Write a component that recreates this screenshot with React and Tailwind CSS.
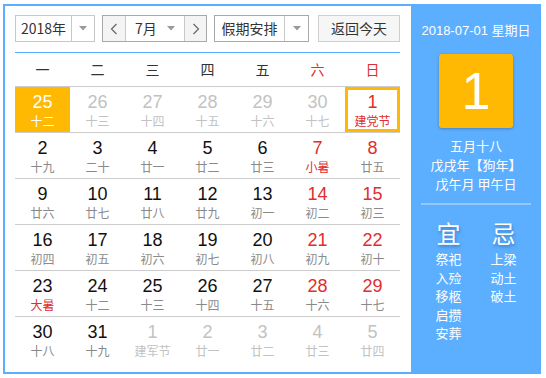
import React from "react";

const RED = "text-[#e12d2d]";

const rows = [
  [
    { d: "25", l: "十二", t: "hl" },
    { d: "26", l: "十三", t: "other" },
    { d: "27", l: "十四", t: "other" },
    { d: "28", l: "十五", t: "other" },
    { d: "29", l: "十六", t: "other" },
    { d: "30", l: "十七", t: "other" },
    { d: "1", l: "建党节", t: "sel" },
  ],
  [
    { d: "2", l: "十九" },
    { d: "3", l: "二十" },
    { d: "4", l: "廿一" },
    { d: "5", l: "廿二" },
    { d: "6", l: "廿三" },
    { d: "7", l: "小暑", red: true, redL: true },
    { d: "8", l: "廿五", red: true },
  ],
  [
    { d: "9", l: "廿六" },
    { d: "10", l: "廿七" },
    { d: "11", l: "廿八" },
    { d: "12", l: "廿九" },
    { d: "13", l: "初一" },
    { d: "14", l: "初二", red: true },
    { d: "15", l: "初三", red: true },
  ],
  [
    { d: "16", l: "初四" },
    { d: "17", l: "初五" },
    { d: "18", l: "初六" },
    { d: "19", l: "初七" },
    { d: "20", l: "初八" },
    { d: "21", l: "初九", red: true },
    { d: "22", l: "初十", red: true },
  ],
  [
    { d: "23", l: "大暑", redL: true },
    { d: "24", l: "十二" },
    { d: "25", l: "十三" },
    { d: "26", l: "十四" },
    { d: "27", l: "十五" },
    { d: "28", l: "十六", red: true },
    { d: "29", l: "十七", red: true },
  ],
  [
    { d: "30", l: "十八" },
    { d: "31", l: "十九" },
    { d: "1", l: "建军节", t: "other" },
    { d: "2", l: "廿一", t: "other" },
    { d: "3", l: "廿二", t: "other" },
    { d: "4", l: "廿三", t: "other" },
    { d: "5", l: "廿四", t: "other" },
  ],
];

const Tri = () => (
  <svg width="8" height="5" viewBox="0 0 8 5">
    <polygon points="0,0 8,0 4,4.5" fill="#9a9a9a" />
  </svg>
);

const Chev = ({ dir }) => (
  <svg width="8" height="12" viewBox="0 0 8 12">
    <polyline
      points={dir === "l" ? "6.5,1 1.5,6 6.5,11" : "1.5,1 6.5,6 1.5,11"}
      fill="none"
      stroke="#666"
      strokeWidth="1.2"
    />
  </svg>
);

function Cell({ c }) {
  const other = c.t === "other";
  const hl = c.t === "hl";
  const sel = c.t === "sel";
  let numCls = "text-[#111]";
  let lunCls = "text-[#8a8a8a]";
  if (c.red) numCls = RED;
  if (c.redL) lunCls = RED;
  if (other) {
    numCls = "text-[#c2c2c2]";
    lunCls = "text-[#c2c2c2]";
  }
  if (hl) {
    numCls = "text-white";
    lunCls = "text-white";
  }
  if (sel) {
    numCls = RED;
    lunCls = RED;
  }
  return (
    <div
      className={
        "flex flex-col items-center h-[45px] " +
        (hl ? "bg-[#ffb902] pt-[6px] " : "") +
        (sel ? "border-[3px] border-[#ffb902] pt-[3px] " : "pt-[6px] ")
      }
    >
      <div
        className={
          "text-[18px] leading-[18px] font-['Liberation_Sans',Arial,sans-serif] " +
          numCls
        }
      >
        {c.d}
      </div>
      <div
        className={
          "mt-[3px] text-[12px] leading-[14px] font-['Noto_Sans_CJK_SC',sans-serif] " +
          lunCls
        }
      >
        {c.l}
      </div>
    </div>
  );
}

export default function App() {
  const week = ["一", "二", "三", "四", "五", "六", "日"];
  return (
    <div className="w-[546px] h-[378px] bg-white pt-[4px] pl-[3px] font-['Noto_Sans_CJK_SC',sans-serif]">
      <div className="flex w-[538px] h-[370px] border-l-2 border-t-2 border-b-2 border-[#5caeff]">
        {/* left */}
        <div className="w-[406px] pl-[10px] pt-[9px]">
          <div className="flex h-[27px] text-[14px] text-[#333]">
            <div className="flex w-[80px] border border-[#c8c8c8]">
              <div className="w-[55px] flex items-center justify-center">2018年</div>
              <div className="flex-1 border-l border-[#c8c8c8] flex items-center justify-center">
                <Tri />
              </div>
            </div>
            <div className="flex w-[105px] ml-[7px] border border-[#a8a8a8]">
              <div className="w-[23px] bg-[#f4f4f4] flex items-center justify-center border-r border-[#c8c8c8]">
                <Chev dir="l" />
              </div>
              <div className="flex-1 flex items-center pl-[9px] pr-[9px] justify-between">
                <span>7月</span>
                <Tri />
              </div>
              <div className="w-[22px] bg-[#f4f4f4] flex items-center justify-center border-l border-[#c8c8c8]">
                <Chev dir="r" />
              </div>
            </div>
            <div className="flex w-[95px] ml-[7px] border border-[#a8a8a8]">
              <div className="w-[69px] flex items-center justify-center">假期安排</div>
              <div className="flex-1 border-l border-[#c8c8c8] flex items-center justify-center">
                <Tri />
              </div>
            </div>
            <div className="w-[82px] ml-[9px] border border-[#cfcfcf] bg-[#f6f6f6] flex items-center justify-center">
              返回今天
            </div>
          </div>
          <div className="w-[385px] mt-[10px] h-px bg-[#5caeff]" />
          <div className="w-[385px] grid grid-cols-7 h-[33px] items-center text-[14px]">
            {week.map((w, i) => (
              <div
                key={w}
                className={"text-center " + (i >= 5 ? RED : "text-[#333]")}
              >
                {w}
              </div>
            ))}
          </div>
          <div className="w-[385px]">
            {rows.map((r, ri) => (
              <div key={ri} className="grid grid-cols-7 border-t border-[#cccccc]">
                {r.map((c, ci) => (
                  <Cell key={ci} c={c} />
                ))}
              </div>
            ))}
          </div>
        </div>
        {/* right panel */}
        <div className="w-[130px] -mt-[2px] -mb-[2px] bg-[#5caeff] flex flex-col items-center text-white pt-[17px]">
          <div className="text-[13px] leading-[19px] font-['Liberation_Sans','Noto_Sans_CJK_SC',sans-serif]">
            2018-07-01 星期日
          </div>
          <div className="mt-[14px] w-[74px] h-[74px] rounded-[3px] bg-[#ffb902] shadow-[0_1px_3px_rgba(0,0,0,0.25)] flex items-center justify-center text-[52px] leading-none font-['Liberation_Sans',Arial,sans-serif]">
            1
          </div>
          <div className="mt-[8px] text-[13px] leading-[19px] text-center">
            <div>五月十八</div>
            <div>戊戌年【狗年】</div>
            <div>戊午月 甲午日</div>
          </div>
          <div className="mt-[10px] w-[110px] h-[2px] bg-[#94caff]" />
          <div className="flex w-[110px] mt-[14px]">
            <div className="w-[55px] flex flex-col items-center">
              <div className="text-[24px] leading-[28px] [text-shadow:1px_2px_3px_rgba(0,40,100,0.35)]">宜</div>
              <div className="mt-[3px] text-[13px] leading-[18.5px] text-center">
                <div>祭祀</div>
                <div>入殓</div>
                <div>移柩</div>
                <div>启攒</div>
                <div>安葬</div>
              </div>
            </div>
            <div className="w-[55px] flex flex-col items-center">
              <div className="text-[24px] leading-[28px] [text-shadow:1px_2px_3px_rgba(0,40,100,0.35)]">忌</div>
              <div className="mt-[3px] text-[13px] leading-[18.5px] text-center">
                <div>上梁</div>
                <div>动土</div>
                <div>破土</div>
              </div>
            </div>
          </div>
        </div>
      </div>
    </div>
  );
}
